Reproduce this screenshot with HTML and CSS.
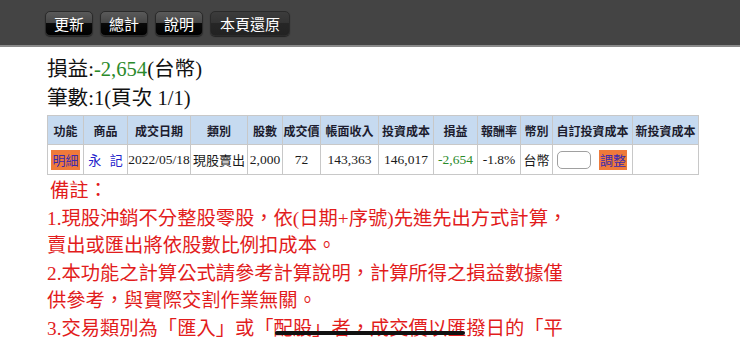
FILE: index.html
```html
<!DOCTYPE html>
<html lang="zh-Hant">
<head>
<meta charset="utf-8">
<title>損益</title>
<link rel="stylesheet" href="styles.css">
</head>
<body>
<div class="topbar">
  <button class="tbtn">更新</button>
  <button class="tbtn">總計</button>
  <button class="tbtn">說明</button>
  <button class="tbtn flat">本頁還原</button>
</div>
<main class="content">
  <div class="summary">損益:<span class="loss">-2,654</span>(台幣)</div>
  <div class="summary">筆數:1(頁次 1/1)</div>
  <table class="grid">
    <colgroup>
      <col class="c36"><col class="c44"><col class="c63"><col class="c57"><col class="c35"><col class="c38"><col class="c58"><col class="c55"><col class="c44"><col class="c43"><col class="c32"><col class="c80"><col class="c66">
    </colgroup>
    <thead>
      <tr>
        <th>功能</th><th>商品</th><th>成交日期</th><th>類別</th><th>股數</th><th>成交價</th><th>帳面收入</th><th>投資成本</th><th>損益</th><th>報酬率</th><th>幣別</th><th>自訂投資成本</th><th>新投資成本</th>
      </tr>
    </thead>
    <tbody>
      <tr>
        <td><span class="obtn">明細</span></td>
        <td class="prod">永&nbsp;&nbsp;&nbsp;記</td>
        <td>2022/05/18</td>
        <td class="cjk">現股賣出</td>
        <td>2,000</td>
        <td>72</td>
        <td>143,363</td>
        <td>146,017</td>
        <td class="neg">-2,654</td>
        <td>-1.8%</td>
        <td class="cjk">台幣</td>
        <td class="custom"><span class="inbox"></span><span class="obtn">調整</span></td>
        <td></td>
      </tr>
    </tbody>
  </table>
  <div class="notes">
    <div class="note-title">備註：</div>
    <p class="note">1.現股沖銷不分整股零股，依(日期+序號)先進先出方式計算，賣出或匯出將依股數比例扣成本。</p>
    <p class="note">2.本功能之計算公式請參考計算說明，計算所得之損益數據僅供參考，與實際交割作業無關。</p>
    <p class="note">3.交易類別為「匯入」或「配股」者，成交價以匯撥日的「平</p>
  </div>
</main>
<div class="home-indicator"></div>
</body>
</html>
```

FILE: styles.css
```css
html, body {
  margin: 0;
  padding: 0;
  background: #ffffff;
  overflow: hidden;
}
body {
  width: 740px;
  height: 342px;
  position: relative;
  font-family: "Liberation Serif", "Noto Sans CJK TC", serif;
}
.topbar {
  height: 45px;
  background: #444444;
  border-bottom: 2px solid #8a8a8a;
  display: flex;
  align-items: flex-start;
  gap: 7px;
  padding-left: 45px;
}
.tbtn {
  margin-top: 11px;
  height: 25px;
  padding: 0 8px;
  min-width: 44px;
  border: 1px solid #2a2a2a;
  border-radius: 5px;
  background: linear-gradient(to bottom, #5a5a5a 0%, #454545 50%, #0a0a0a 50%, #000000 100%);
  color: #ffffff;
  font-family: "Noto Sans CJK TC", sans-serif;
  font-size: 15px;
  line-height: 23px;
  box-shadow: 0 1px 1px rgba(0,0,0,0.5);
}
.tbtn.flat {
  background: linear-gradient(to bottom, #3c3c3c 0%, #333333 50%, #262626 50%, #222222 100%);
  padding: 0 9px;
}
.content {
  padding-left: 47px;
  padding-top: 8px;
}
.summary {
  font-size: 20.6px;
  line-height: 29px;
  color: #111111;
}
.loss {
  color: #2a8a2a;
}
.grid {
  margin-top: 2px;
  border-collapse: collapse;
  table-layout: fixed;
  width: 651px;
  font-size: 13.5px;
}
.c36 { width: 36px; }
.c44 { width: 44px; }
.c63 { width: 63px; }
.c57 { width: 57px; }
.c35 { width: 35px; }
.c38 { width: 38px; }
.c58 { width: 58px; }
.c55 { width: 55px; }
.c43 { width: 43px; }
.c32 { width: 32px; }
.c80 { width: 80px; }
.c66 { width: 66px; }
.grid th, .grid td {
  border: 1px solid #c8c8c8;
  padding: 0;
  text-align: center;
  white-space: nowrap;
}
.grid th {
  height: 28px;
  background: #c6daf0;
  font-family: "Noto Sans CJK TC", sans-serif;
  font-weight: bold;
  font-size: 12px;
  color: #1c1c2e;
}
.grid td {
  height: 29px;
  color: #1a1a1a;
}
.grid td.neg {
  color: #2a8a2a;
}
.grid td.cjk {
  font-family: "Noto Sans CJK TC", sans-serif;
  font-size: 13px;
}
.grid td.prod {
  color: #2222cc;
  font-family: "Noto Sans CJK TC", sans-serif;
  font-size: 13px;
}
.obtn {
  display: inline-block;
  background: #ef7a3a;
  color: #3a2ab0;
  font-family: "Noto Sans CJK TC", sans-serif;
  font-size: 13px;
  line-height: 20px;
  padding: 0 1px;
  vertical-align: middle;
}
.grid td.custom {
  text-align: left;
  padding-left: 4px;
}
.inbox {
  display: inline-block;
  width: 32px;
  height: 16px;
  border: 1px solid #a0a0a0;
  border-radius: 5px;
  background: #ffffff;
  vertical-align: middle;
  margin-right: 8px;
}
.notes {
  width: 530px;
  color: #e21c1c;
  font-size: 19.3px;
  line-height: 27.5px;
  padding-top: 2px;
}
.note-title {
  padding-left: 3px;
}
.note {
  margin: 0;
}
.home-indicator {
  position: absolute;
  left: 275px;
  top: 331px;
  width: 190px;
  height: 4px;
  border-radius: 2px;
  background: #111111;
}
```
